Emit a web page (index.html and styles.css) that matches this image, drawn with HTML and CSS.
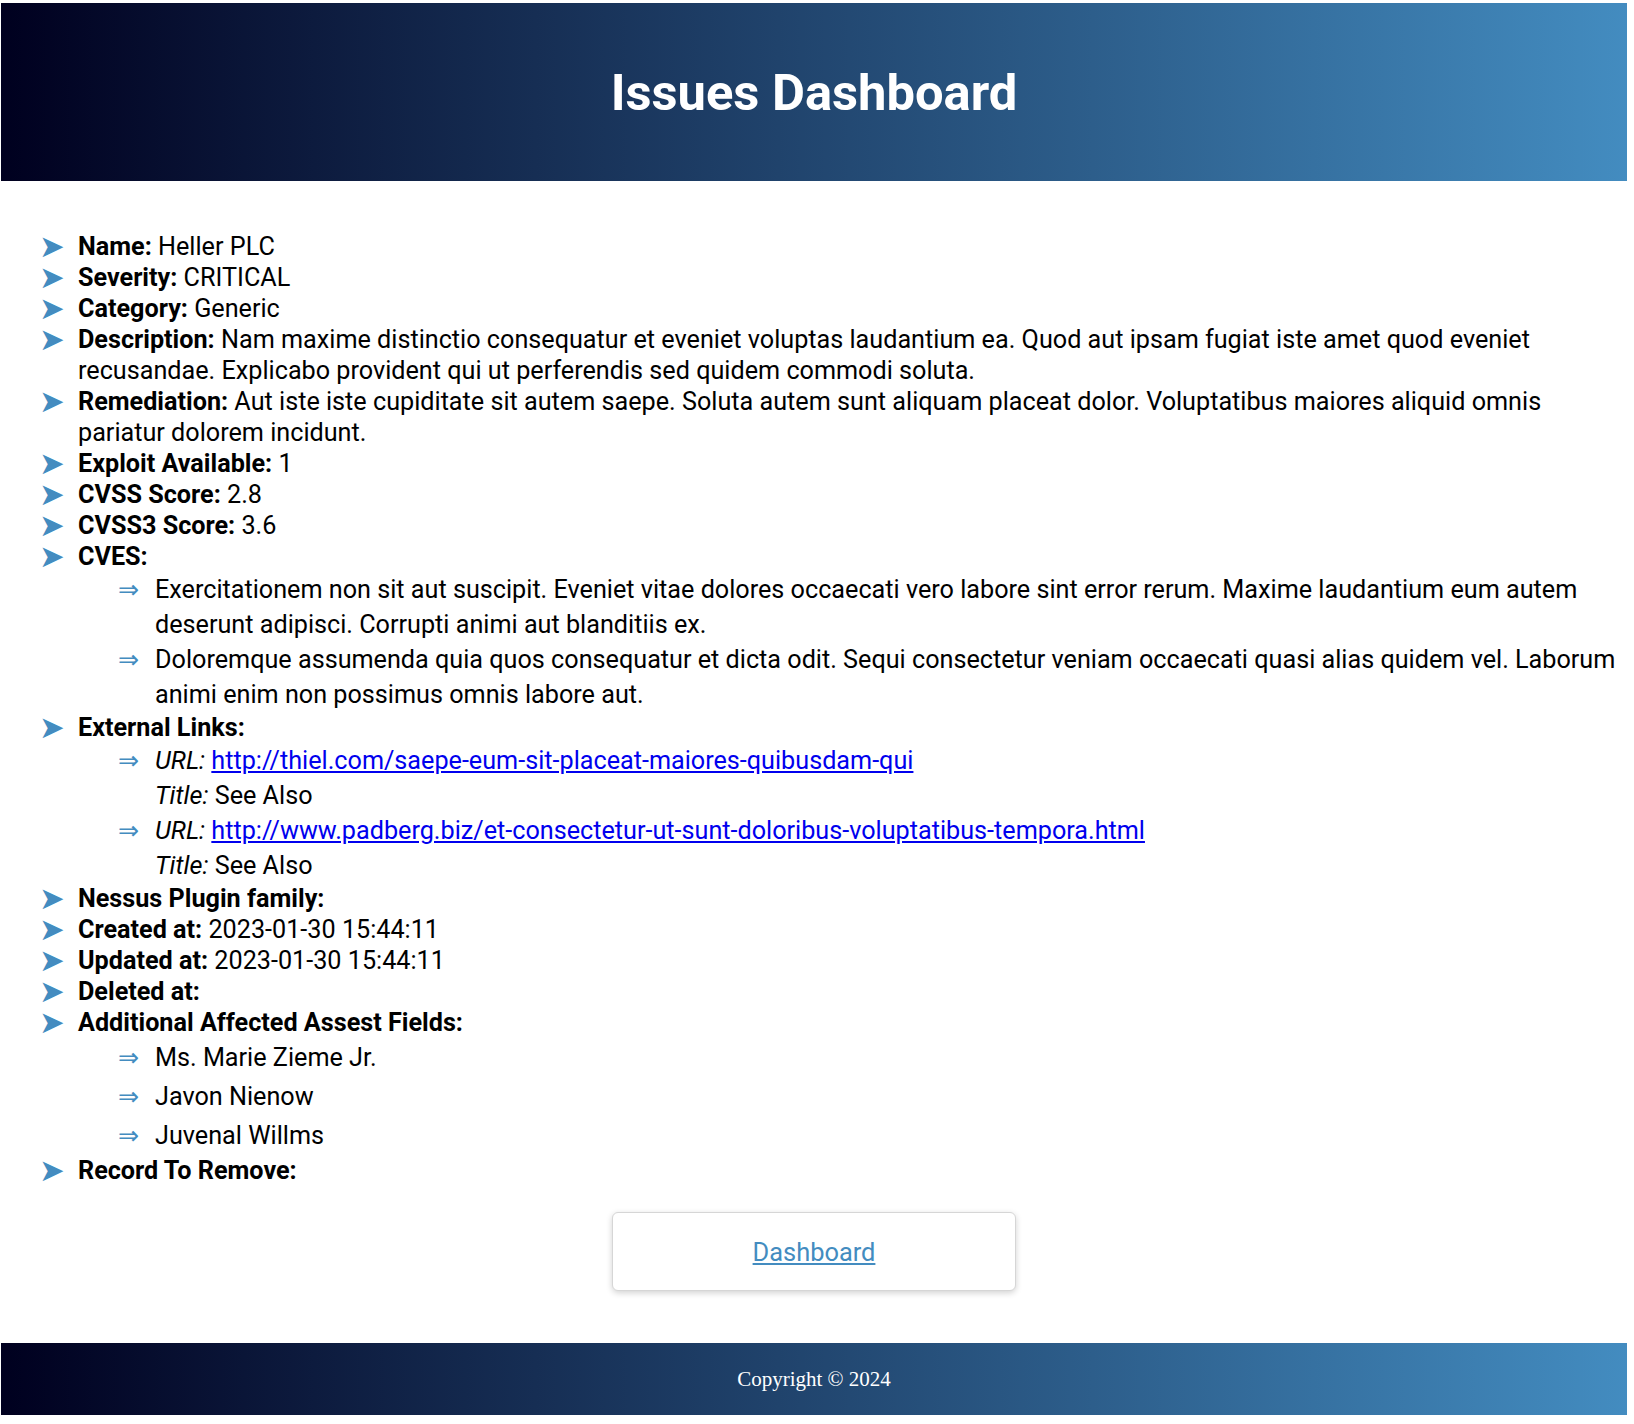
FILE: index.html
```html
<!DOCTYPE html>
<html lang="en">
<head>
<meta charset="utf-8">
<title>Issues Dashboard</title>
<link rel="stylesheet" href="styles.css">
</head>
<body>
<div class="page">
  <header class="hero">
    <h1 class="hero-title">Issues Dashboard</h1>
  </header>

  <main class="content">
    <ul class="details">
      <li class="item"><div class="item-body"><b>Name:</b> Heller PLC</div></li>
      <li class="item"><div class="item-body"><b>Severity:</b> CRITICAL</div></li>
      <li class="item"><div class="item-body"><b>Category:</b> Generic</div></li>
      <li class="item"><div class="item-body"><b>Description:</b> Nam maxime distinctio consequatur et eveniet voluptas laudantium ea. Quod aut ipsam fugiat iste amet quod eveniet recusandae. Explicabo provident qui ut perferendis sed quidem commodi soluta.</div></li>
      <li class="item"><div class="item-body"><b>Remediation:</b> Aut iste iste cupiditate sit autem saepe. Soluta autem sunt aliquam placeat dolor. Voluptatibus maiores aliquid omnis pariatur dolorem incidunt.</div></li>
      <li class="item"><div class="item-body"><b>Exploit Available:</b> 1</div></li>
      <li class="item"><div class="item-body"><b>CVSS Score:</b> 2.8</div></li>
      <li class="item"><div class="item-body"><b>CVSS3 Score:</b> 3.6</div></li>
      <li class="item">
        <div class="item-body">
          <b>CVES:</b>
          <ul class="sublist">
            <li class="subitem"><div class="subitem-body">Exercitationem non sit aut suscipit. Eveniet vitae dolores occaecati vero labore sint error rerum. Maxime laudantium eum autem deserunt adipisci. Corrupti animi aut blanditiis ex.</div></li>
            <li class="subitem"><div class="subitem-body">Doloremque assumenda quia quos consequatur et dicta odit. Sequi consectetur veniam occaecati quasi alias quidem vel. Laborum animi enim non possimus omnis labore aut.</div></li>
          </ul>
        </div>
      </li>
      <li class="item">
        <div class="item-body">
          <b>External Links:</b>
          <ul class="sublist">
            <li class="subitem"><div class="subitem-body">
              <div><i>URL:</i> <a class="ext-link" href="#">http://thiel.com/saepe-eum-sit-placeat-maiores-quibusdam-qui</a></div>
              <div><i>Title:</i> See Also</div>
            </div></li>
            <li class="subitem"><div class="subitem-body">
              <div><i>URL:</i> <a class="ext-link" href="#">http://www.padberg.biz/et-consectetur-ut-sunt-doloribus-voluptatibus-tempora.html</a></div>
              <div><i>Title:</i> See Also</div>
            </div></li>
          </ul>
        </div>
      </li>
      <li class="item"><div class="item-body"><b>Nessus Plugin family:</b></div></li>
      <li class="item"><div class="item-body"><b>Created at:</b> 2023-01-30 15:44:11</div></li>
      <li class="item"><div class="item-body"><b>Updated at:</b> 2023-01-30 15:44:11</div></li>
      <li class="item"><div class="item-body"><b>Deleted at:</b></div></li>
      <li class="item">
        <div class="item-body">
          <b>Additional Affected Assest Fields:</b>
          <ul class="sublist">
            <li class="subitem subitem-loose"><div class="subitem-body">Ms. Marie Zieme Jr.</div></li>
            <li class="subitem subitem-loose"><div class="subitem-body">Javon Nienow</div></li>
            <li class="subitem subitem-loose"><div class="subitem-body">Juvenal Willms</div></li>
          </ul>
        </div>
      </li>
      <li class="item"><div class="item-body"><b>Record To Remove:</b></div></li>
    </ul>

    <div class="actions">
      <div class="action-card"><a class="action-link" href="#">Dashboard</a></div>
    </div>
  </main>

  <footer class="site-footer">Copyright © 2024</footer>
</div>
</body>
</html>
```

FILE: styles.css
```css
html, body {
  margin: 0;
  padding: 0;
  background: #ffffff;
}

body {
  font-family: Roboto, "Liberation Sans", Arial, sans-serif;
  color: #000000;
}

.page {
  margin: 3px 7px 0 1px;
  display: flex;
  flex-direction: column;
}

.hero {
  height: 178px;
  display: flex;
  align-items: center;
  justify-content: center;
  background: linear-gradient(to right, #00001f, #438cc0);
}

.hero-title {
  margin: 0;
  font-family: Roboto, "Liberation Sans", Arial, sans-serif;
  font-weight: 700;
  font-size: 50.7px;
  color: #ffffff;
}

.content {
  padding-top: 50px;
  display: flex;
  flex-direction: column;
}

.details {
  list-style: none;
  margin: 0 0 0 38px;
  padding: 0;
  font-size: 25.2px;
  line-height: 31px;
}

.item {
  display: grid;
  grid-template-columns: 39px 1fr;
  align-items: start;
}

.item::before {
  content: "\27A4";
  font-family: "DejaVu Sans", sans-serif;
  line-height: 31px;
  color: #438cc0;
  transform: scale(1.22);
  transform-origin: 0 55%;
}

.item-body b {
  font-weight: 700;
}

.sublist {
  list-style: none;
  margin: 0 0 0 40px;
  padding: 0;
  line-height: 35px;
}

.subitem {
  display: grid;
  grid-template-columns: 37px 1fr;
}

.subitem-loose {
  line-height: 39px;
}

.subitem::before {
  content: "\21D2";
  font-family: "DejaVu Sans", sans-serif;
  color: #438cc0;
}

.subitem-body i {
  font-style: italic;
}

.ext-link {
  color: #0000ee;
  text-decoration: underline;
}

.actions {
  margin-top: 26px;
  display: flex;
  justify-content: center;
}

.action-card {
  width: 404px;
  height: 79px;
  box-sizing: border-box;
  border: 1px solid #d6d6d6;
  border-radius: 6px;
  box-shadow: 0 2px 6px rgba(0, 0, 0, 0.18);
  display: flex;
  align-items: center;
  justify-content: center;
  background: #ffffff;
}

.action-link {
  font-size: 25.4px;
  color: #438cc0;
  text-decoration: underline;
}

.site-footer {
  margin-top: 52px;
  height: 72px;
  display: flex;
  align-items: center;
  justify-content: center;
  background: linear-gradient(to right, #00001f, #438cc0);
  color: #ffffff;
  font-family: "Liberation Serif", "Times New Roman", serif;
  font-size: 21px;
  box-shadow: 0 7px 6px -2px rgba(0, 0, 0, 0.03);
}
```
